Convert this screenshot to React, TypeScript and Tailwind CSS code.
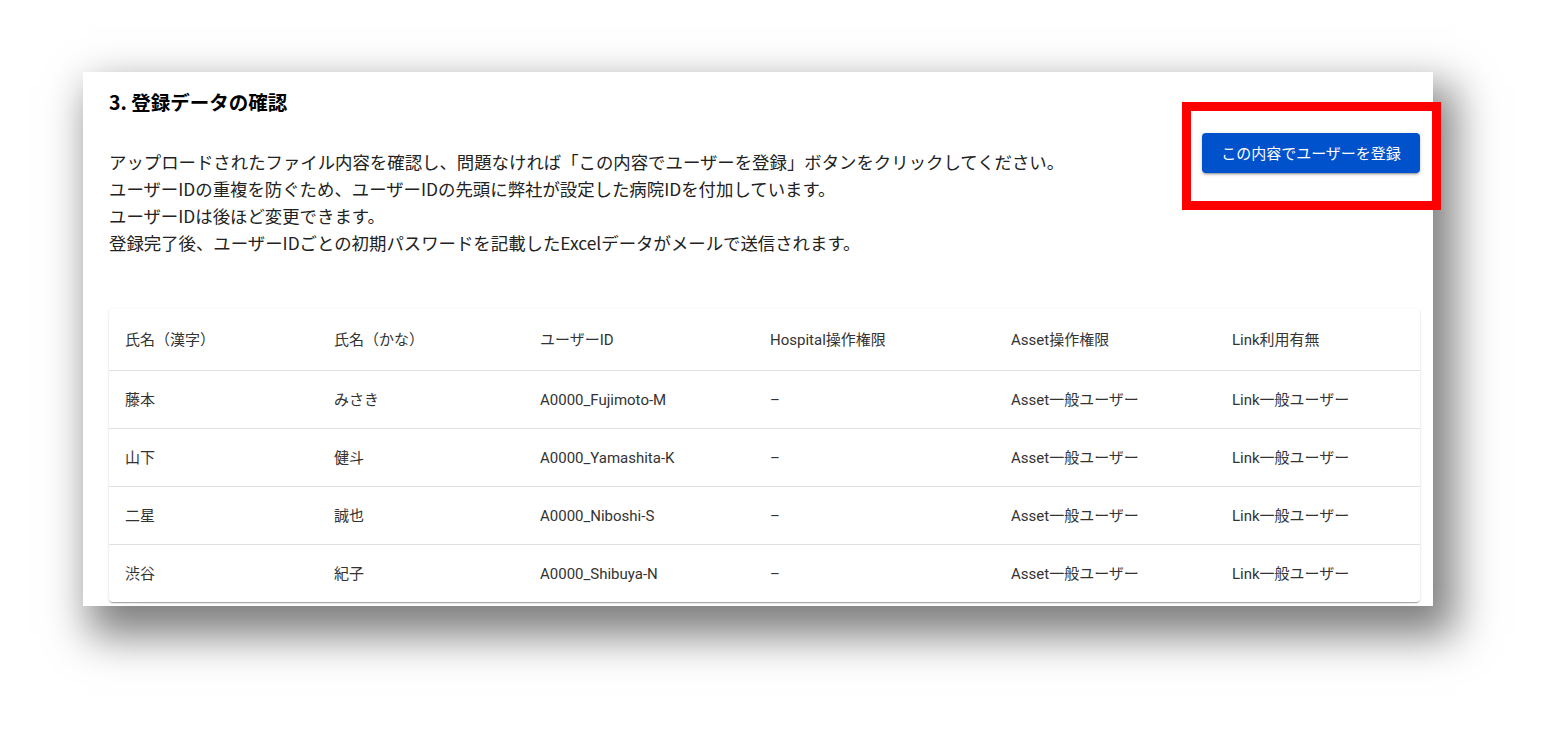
const rows = [
  { kanji: "藤本", kana: "みさき", id: "A0000_Fujimoto-M" },
  { kanji: "山下", kana: "健斗", id: "A0000_Yamashita-K" },
  { kanji: "二星", kana: "誠也", id: "A0000_Niboshi-S" },
  { kanji: "渋谷", kana: "紀子", id: "A0000_Shibuya-N" },
];

const headers = ["氏名（漢字）", "氏名（かな）", "ユーザーID", "Hospital操作権限", "Asset操作権限", "Link利用有無"];

const gridCols = "grid grid-cols-[209px_206px_230px_241px_221px_1fr] items-center";

const App = () => {
  return (
    <div className="min-h-[739px] w-full bg-white pt-[72px] pl-[83px] font-['Noto_Sans_CJK_JP',sans-serif]">
      <div className="relative w-[1350px] h-[534px] bg-white pt-[16px] pl-[26px] pr-[13px] shadow-[14px_22px_40px_8px_rgba(0,0,0,0.5)]">
        <div className="flex items-start justify-between">
          <div>
            <h2 className="text-[19.5px] leading-[28px] font-bold text-black">3. 登録データの確認</h2>
            <div className="mt-[32px] text-[17.4px] leading-[27px] text-[#222]">
              <p>アップロードされたファイル内容を確認し、問題なければ「この内容でユーザーを登録」ボタンをクリックしてください。</p>
              <p>ユーザーIDの重複を防ぐため、ユーザーIDの先頭に弊社が設定した病院IDを付加しています。</p>
              <p>ユーザーIDは後ほど変更できます。</p>
              <p>登録完了後、ユーザーIDごとの初期パスワードを記載したExcelデータがメールで送信されます。</p>
            </div>
          </div>
          <button className="mt-[45px] w-[218px] h-[40px] rounded-[4px] bg-[#0052cc] text-white text-[15px] shadow-[0_3px_1px_-2px_rgba(0,0,0,0.2),0_2px_2px_0_rgba(0,0,0,0.14),0_1px_5px_0_rgba(0,0,0,0.12)]">
            この内容でユーザーを登録
          </button>
        </div>

        <div className="absolute left-[1099px] top-[30px] w-[259px] h-[108px] border-[9px] border-[#ff0000]" />

        <div className="mt-[53px] rounded-[4px] bg-white text-[15px] text-[#333] font-['Roboto','Noto_Sans_CJK_JP',sans-serif] shadow-[0_2px_1px_-1px_rgba(0,0,0,0.2),0_1px_1px_0_rgba(0,0,0,0.14),0_1px_3px_0_rgba(0,0,0,0.12)]">
          <div className={`${gridCols} h-[62px] border-b border-[#e0e0e0]`}>
            {headers.map((h) => (
              <div key={h} className="pl-[16px] pt-[2px]">{h}</div>
            ))}
          </div>
          {rows.map((r, i) => (
            <div
              key={r.id}
              className={`${gridCols} ${i < rows.length - 1 ? "h-[58px] border-b border-[#e0e0e0]" : "h-[57px]"}`}
            >
              <div className="pl-[16px] pt-[2px]">{r.kanji}</div>
              <div className="pl-[16px] pt-[2px]">{r.kana}</div>
              <div className="pl-[16px] pt-[2px]">{r.id}</div>
              <div className="pl-[16px] pt-[2px]">–</div>
              <div className="pl-[16px] pt-[2px]">Asset一般ユーザー</div>
              <div className="pl-[16px] pt-[2px]">Link一般ユーザー</div>
            </div>
          ))}
        </div>
      </div>
    </div>
  );
};

export default App;
